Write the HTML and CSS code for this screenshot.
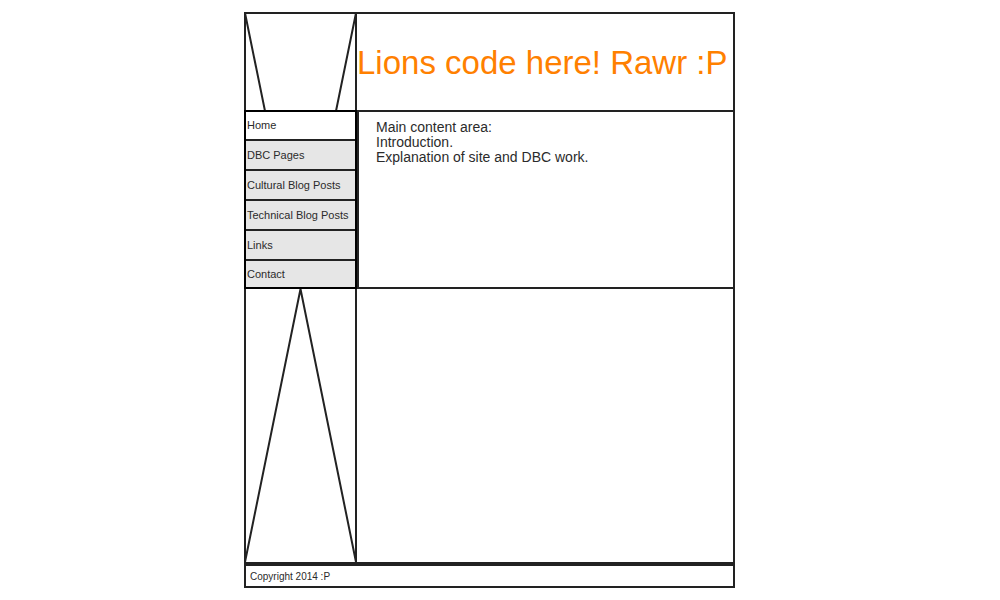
FILE: index.html
```html
<!DOCTYPE html>
<html lang="en">
<head>
<meta charset="utf-8">
<meta name="viewport" content="width=device-width, initial-scale=1">
<title>Lions code here! Rawr :P</title>
<link rel="stylesheet" href="styles.css">
</head>
<body>
<div class="page">
  <div class="layout">
    <div class="image-slot">
      <svg class="cross" viewBox="0 0 109 96" aria-hidden="true"><path d="M-1 -1L19 97M110 -1L90 97"/></svg>
    </div>
    <header class="header"><h1 class="title">Lions code here! Rawr :P</h1></header>
    <nav class="nav" aria-label="Main">
      <a class="nav-link current" href="#home" aria-current="page">Home</a>
      <a class="nav-link" href="#dbc">DBC Pages</a>
      <a class="nav-link" href="#cultural">Cultural Blog Posts</a>
      <a class="nav-link" href="#technical">Technical Blog Posts</a>
      <a class="nav-link" href="#links">Links</a>
      <a class="nav-link" href="#contact">Contact</a>
    </nav>
    <main class="content">
      <p>Main content area:</p>
      <p>Introduction.</p>
      <p>Explanation of site and DBC work.</p>
    </main>
    <div class="image-slot">
      <svg class="cross" viewBox="0 0 109 273" aria-hidden="true"><path d="M-1 273L54.5 0L110 273"/></svg>
    </div>
    <div class="blank"></div>
  </div>
  <footer class="footer">Copyright 2014 :P</footer>
</div>
</body>
</html>
```
FILE: styles.css
```css
* { box-sizing: border-box; }

body {
  margin: 0;
  padding: 12px 21px 12px 0;
  background: #fff;
  color: #2b2b2b;
  font-family: "Liberation Sans", Arial, sans-serif;
}

.page {
  max-width: 491px;
  margin: 0 auto;
  border: 2px solid #222;
}

.layout {
  display: grid;
  grid-template-columns: 111px 1fr;
  grid-template-rows: minmax(96px, auto) auto minmax(273px, auto);
}

.image-slot { border-right: 2px solid #222; }

.cross {
  display: block;
  width: 100%;
  overflow: visible;
  fill: none;
  stroke: #222;
  stroke-width: 2;
}

.header {
  display: flex;
  align-items: center;
  padding-top: 2px;
}

.title {
  margin: 0;
  color: #ff8000;
  font-size: 33px;
  font-weight: normal;
  line-height: 38px;
}

.nav {
  position: relative;
  display: flex;
  flex-direction: column;
  margin-left: -2px;
  border: 2px solid #000;
}

.nav-link {
  padding: 8px 0 8px 1px;
  border-bottom: 2px solid #222;
  background: #e6e6e6;
  color: #2b2b2b;
  font-size: 11px;
  line-height: 12px;
  text-decoration: none;
}

.nav-link.current {
  padding-top: 7px;
  background: #fff;
}

.nav-link:last-child {
  padding: 7px 0 7px 1px;
  border-bottom: 0;
}

.content {
  padding: 8px 17px;
  border: solid #222;
  border-width: 2px 0 2px 2px;
  font-size: 14px;
  line-height: 15px;
}

.content p { margin: 0; }

.footer {
  padding: 5px 4px 3px;
  border-top: 4px solid #222;
  font-size: 10px;
  line-height: 12px;
}
```
